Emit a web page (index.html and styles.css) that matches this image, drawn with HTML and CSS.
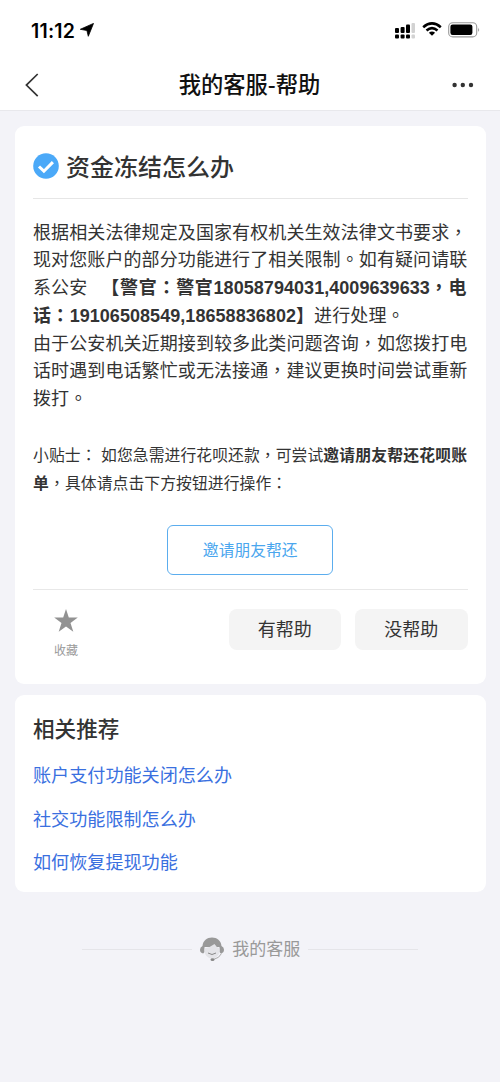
FILE: index.html
```html
<!DOCTYPE html>
<html lang="zh-CN">
<head>
<meta charset="utf-8">
<title>我的客服-帮助</title>
<link rel="stylesheet" href="styles.css">
</head>
<body>
<header class="top">
  <div class="status">
    <span class="time">11:12</span>
    <svg class="arrow" width="14" height="14" viewBox="0 0 14 14"><path d="M13.500.4 8.300 13.300 6.900 7.500.3 6.300z" stroke="#000" stroke-width=".8" stroke-linejoin="round"/></svg>
    <svg class="signal" width="20" height="16" viewBox="0 0 20 16"><g fill="#000"><rect y="5" width="4" height="5" rx="1"/><rect x="5.6" y="4" width="4" height="6" rx="1"/><rect x="11" y="1.5" width="4" height="8.5" rx="1"/><rect y="11.5" width="4" height="4" rx="1"/><rect x="5.6" y="11.5" width="4" height="4" rx="1"/><rect x="11" y="11.5" width="4" height="4" rx="1"/></g><g fill="#d2d2d2"><rect x="16.5" width="3.5" height="10" rx="1"/><rect x="16.5" y="11.5" width="3.5" height="4" rx="1"/></g></svg>
    <svg class="wifi" width="20" height="14" viewBox="0 0 20 14"><g fill="none" stroke="#000" stroke-width="2.6"><path d="M1.2 5.2Q10-2.4 18.8 5.2"/><path d="M4.5 8.6Q10 3.8 15.5 8.6"/></g><path d="M6.9 10.7Q10 8.4 13.1 10.7L10 13.8z"/></svg>
    <svg class="battery" width="32" height="16" viewBox="0 0 32 16"><rect x=".7" y=".7" width="28" height="14.2" rx="4" fill="#fff" stroke="#9a9a9a" stroke-width="1.1"/><rect x="2.4" y="2.5" width="22" height="10.5" rx="2.2"/><path d="M30.3 5.5q1.6 2.3 0 4.6z" fill="#777"/></svg>
  </div>
  <nav class="nav">
    <svg class="back" width="14" height="24" viewBox="0 0 14 24"><path d="M12.7 1 1.4 12.1l11.3 11" fill="none" stroke="#333" stroke-width="1.7"/></svg>
    <h1 class="nav-title">我的客服-帮助</h1>
    <svg class="more" width="22" height="6" viewBox="0 0 22 6" fill="#333"><circle cx="2.6" cy="3" r="2.2"/><circle cx="10.8" cy="3" r="2.2"/><circle cx="19" cy="3" r="2.2"/></svg>
  </nav>
</header>
<main class="page">
  <section class="card answer">
    <div class="heading">
      <svg width="26" height="26" viewBox="0 0 26 26"><circle cx="13" cy="13" r="12.8" fill="#4ba9f8"/><path d="m6 13.5 4.9 4.7 9-9.1" fill="none" stroke="#fff" stroke-width="3"/></svg>
      <h2 class="title">资金冻结怎么办</h2>
    </div>
    <div class="body">
      <p class="row">根据相关法律规定及国家有权机关生效法律文书要求<i class="p" lang="zh-TW">，</i></p>
      <p class="row">现对您账户的部分功能进行了相关限制<i class="p" lang="zh-TW">。</i>如有疑问请联</p>
      <p class="row">系公安<b class="officer">【警官<i class="p" lang="zh-TW">：</i>警官</b><b>18058794031,4009639633</b><b class="after"><i class="p" lang="zh-TW">，</i>电</b></p>
      <p class="row"><b class="phone">话<i class="p" lang="zh-TW">：</i></b><b>19106508549,18658836802</b><b>】</b>进行处理<i class="p" lang="zh-TW">。</i></p>
      <p class="row">由于公安机关近期接到较多此类问题咨询<i class="p" lang="zh-TW">，</i>如您拨打电</p>
      <p class="row">话时遇到电话繁忙或无法接通<i class="p" lang="zh-TW">，</i>建议更换时间尝试重新</p>
      <p class="row">拨打<i class="p" lang="zh-TW">。</i></p>
    </div>
    <div class="tips">
      <p class="row">小贴士<i class="p" lang="zh-TW">：</i> 如您急需进行花呗还款<i class="p" lang="zh-TW">，</i>可尝试<b>邀请朋友帮还花呗账</b></p>
      <p class="row"><b>单</b><i class="p" lang="zh-TW">，</i>具体请点击下方按钮进行操作<i class="p" lang="zh-TW">：</i></p>
    </div>
    <button class="invite">邀请朋友帮还</button>
    <div class="feedback">
      <div class="favorite">
        <svg width="24" height="23" viewBox="0 0 24 23"><path d="m12 0 2.8 8.5h9L16.5 14l2.8 8.8L12 17.4l-7.3 5.4L7.5 14 .2 8.5h9z" fill="#929292"/></svg>
        <span>收藏</span>
      </div>
      <button class="vote">有帮助</button>
      <button class="vote">没帮助</button>
    </div>
  </section>
  <section class="card related">
    <h3 class="related-title">相关推荐</h3>
    <a class="link">账户支付功能关闭怎么办</a>
    <a class="link">社交功能限制怎么办</a>
    <a class="link">如何恢复提现功能</a>
  </section>
  <footer class="service">
    <svg width="24" height="25" viewBox="0 0 24 25"><path d="M2.500 9C3 3.500 7 .5 12 .5S21 3.500 21.500 9q2.500 1 2.500 3.800 0 3.200-3.200 3.700l-1.300-1.500V10L4.500 10v5l-1.300 1.500Q0 16 0 12.800 0 10 2.500 9z" fill="#999"/><path d="M4.500 11.500Q10 10.500 14.500 7q1.500 3 5 4.200.5 5-2 7.800-2.500 2.500-5.500 2.500T6.500 19q-2.500-2.800-2-7.500z" fill="#e4e4e8"/><path d="M8 16q4 3 8 0" fill="none" stroke="#888"/><path d="M21.500 16.500Q19.500 21 13.500 22.500" fill="none" stroke="#aaa"/><ellipse cx="12.500" cy="22.700" rx="2" ry="1.400" fill="#888"/></svg>
    <span>我的客服</span>
  </footer>
</main>
</body>
</html>
```
FILE: styles.css
```css
* { box-sizing: border-box; }
body {
  margin: 0;
  background: #f3f3f8;
  color: #333;
  font-family: "Liberation Sans", "Noto Sans CJK SC", sans-serif;
}
h1, h2, h3, p { margin: 0; }
svg { display: block; flex: none; }
button { border: 0; padding: 0; font-family: inherit; }
.top { height: 111px; background: #fff; border-bottom: 1px solid #e8e8ec; }
.status { height: 60px; display: flex; align-items: center; padding: 1px 20px 0 31px; }
.time { font: 600 19.500px/24px Inter, sans-serif; letter-spacing: .2px; color: #000; width: 45px; white-space: nowrap; }
.arrow { margin-left: 4px; margin-top: -1px; }
.signal { margin-left: auto; }
.wifi { margin-left: 7px; margin-top: -3px; }
.battery { margin-left: 6px; margin-top: -1px; }
.nav { height: 50px; display: flex; align-items: center; justify-content: space-between; padding: 0 26px 0 25px; }
.nav-title { font-family: "Noto Sans CJK SC", sans-serif; font-size: 22.300px; line-height: 32px; font-weight: 500; color: #111; padding: 0 0 4px 8px; }
.page { padding: 15px 14.500px 0 15px; }
.card { background: #fff; border-radius: 9px; padding: 0 18px; }
.answer { height: 558px; }
.heading { height: 73px; display: flex; align-items: center; gap: 7px; padding-top: 8px; border-bottom: 1px solid #e6e6e6; }
.title { font-size: 24px; line-height: 34px; font-weight: 500; padding-top: 3px; }
.row { white-space: nowrap; }
.p { font-style: normal; font-family: "Noto Sans CJK TC", sans-serif; }
.body { padding-top: 18.500px; font-size: 18px; letter-spacing: .1px; }
.body .row { height: 27.800px; line-height: 27.800px; }
.body b { letter-spacing: .05px; }
.body .officer { margin-left: 14px; letter-spacing: .7px; }
.body .after { letter-spacing: .6px; }
.body .phone { letter-spacing: .3px; }
.tips { padding-top: 28.500px; font-size: 15.800px; letter-spacing: .08px; }
.tips .row { height: 28.500px; line-height: 28.500px; }
.tips b { letter-spacing: .18px; }
.invite {
  display: block;
  width: 166px;
  height: 50px;
  margin: 27px auto 0;
  border: 1.500px solid #5badee;
  border-radius: 6px;
  background: #fff;
  color: #4aa6ee;
  font-size: 15.800px;
}
.feedback { display: flex; align-items: flex-start; gap: 14px; margin-top: 14px; padding-top: 19px; border-top: 1px solid #e8e8e8; }
.favorite { width: 66px; margin-right: auto; display: flex; flex-direction: column; align-items: center; gap: 10px; font-size: 12px; line-height: 18px; color: #999; }
.vote { width: 112.500px; height: 41px; padding-bottom: 2px; border-radius: 8px; background: #f4f4f4; color: #333; font-size: 18px; }
.related { height: 197px; margin-top: 11px; padding-top: 18px; }
.related-title { font-size: 21.600px; line-height: 34px; font-weight: 500; margin-bottom: 8px; }
.link { display: block; height: 43.500px; line-height: 43.500px; font-size: 18.100px; color: #3a70df; }
.service { display: flex; align-items: center; justify-content: center; gap: 8px; margin-top: 42px; font-size: 17px; line-height: 28px; color: #999; }
.service span { padding-top: 2px; }
.service::before, .service::after { content: ""; width: 110px; height: 1px; background: #e5e5e9; }
```
